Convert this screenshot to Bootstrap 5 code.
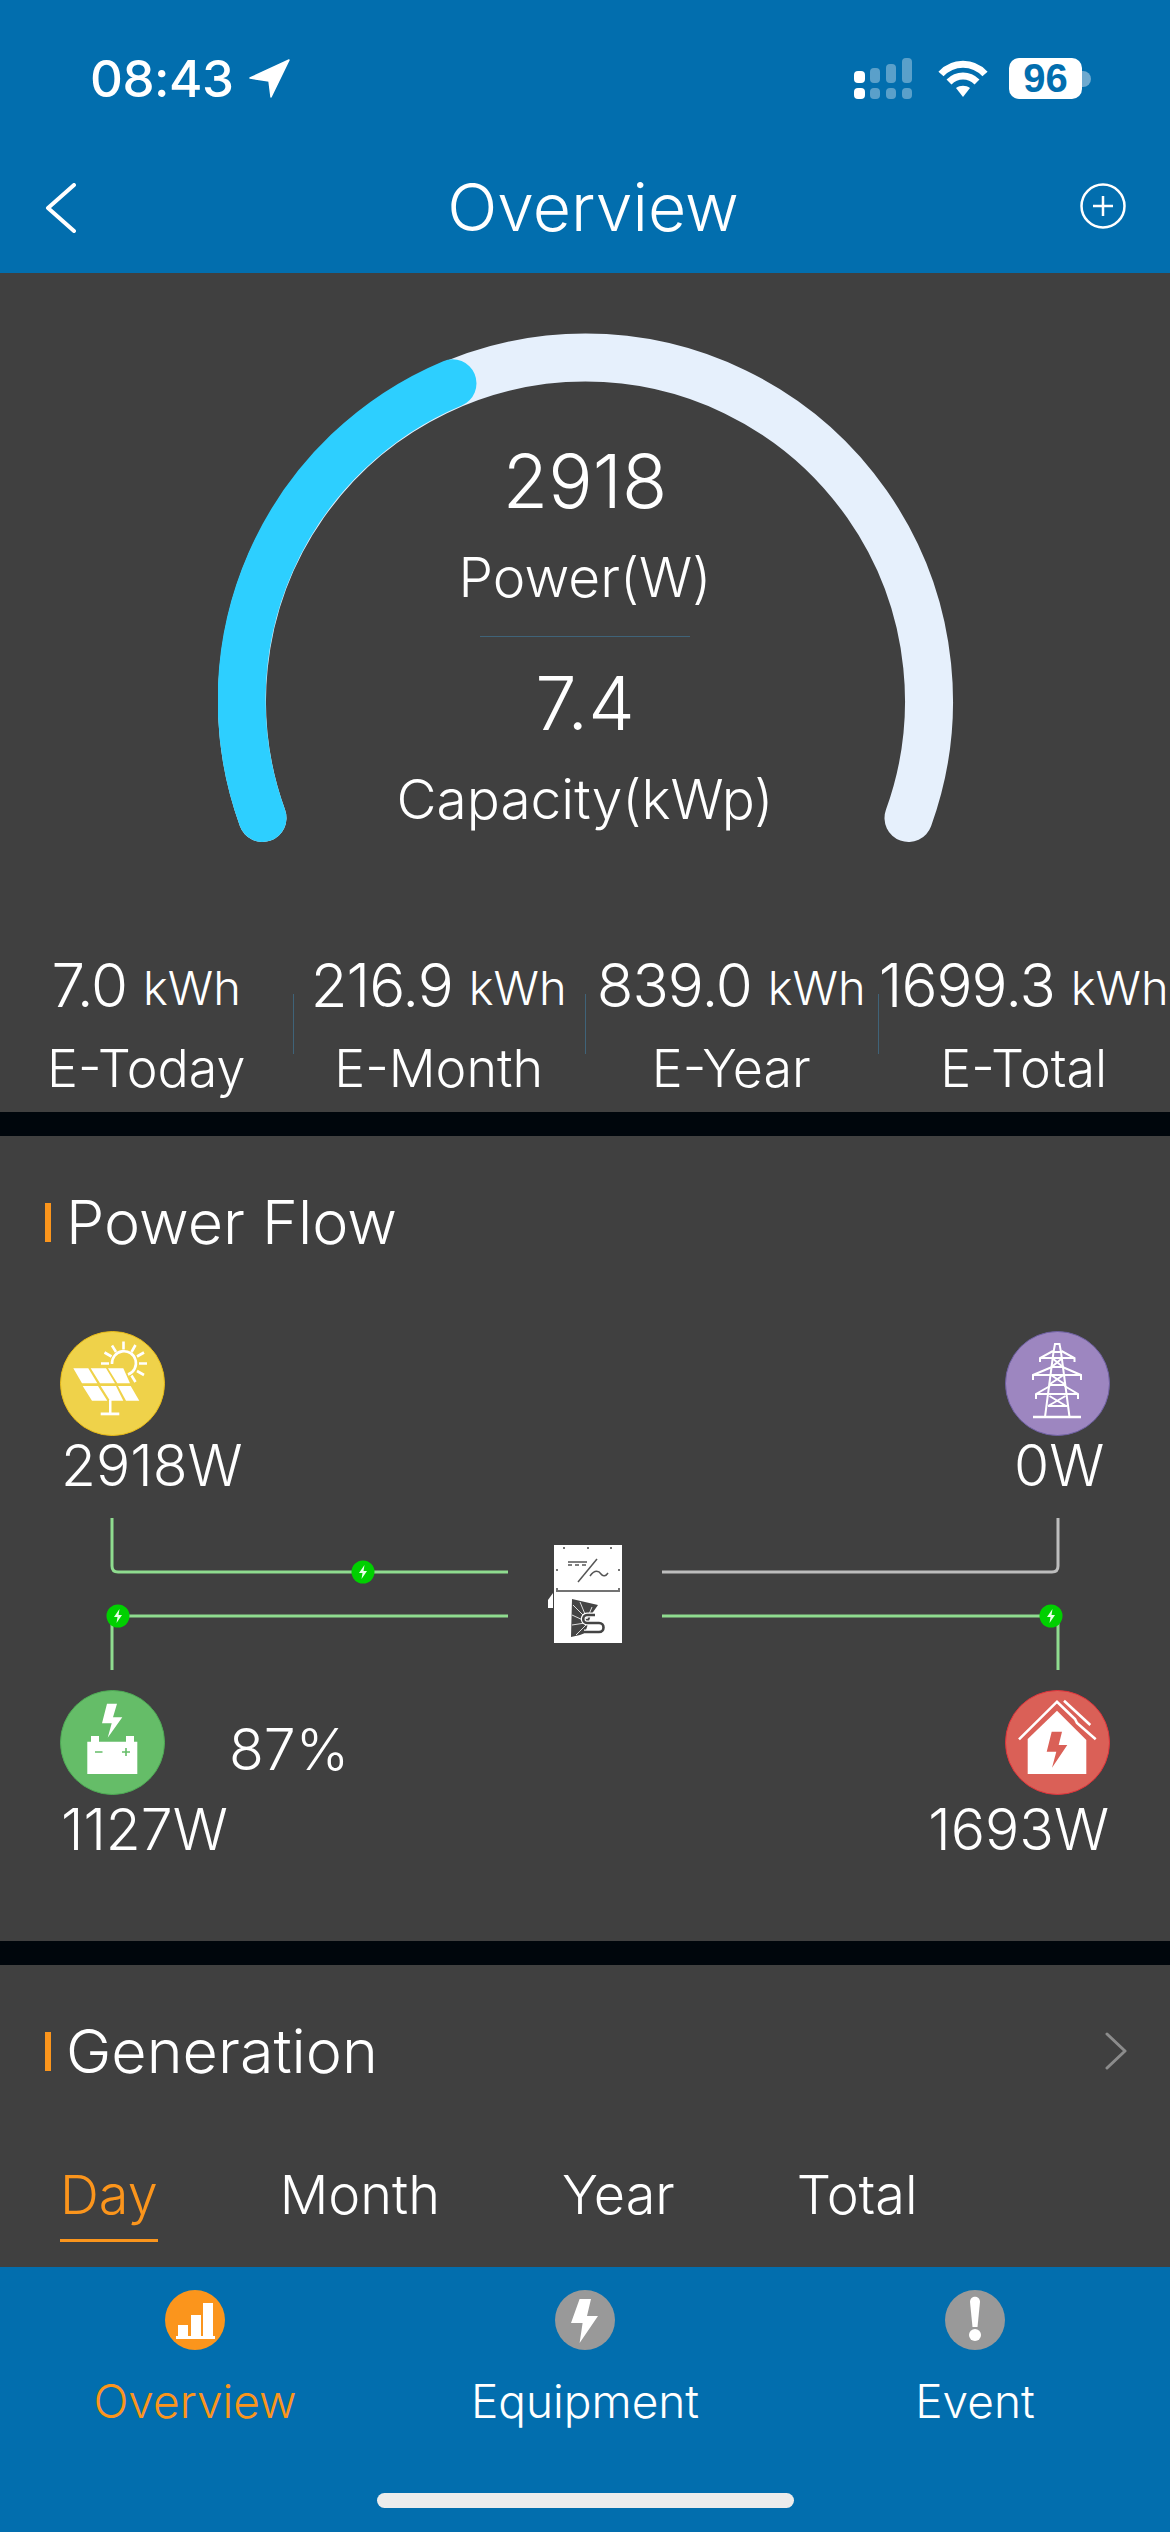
<!DOCTYPE html>
<html>
    <head>
        <meta charset="UTF-8">
        <meta name="viewport" content="width=device-width, initial-scale=1.0">
        <title>Overview</title>
        <link href="https://cdn.jsdelivr.net/npm/bootstrap@5.3.0/dist/css/bootstrap.min.css" rel="stylesheet">
        <script src="https://cdn.jsdelivr.net/npm/bootstrap@5.3.0/dist/js/bootstrap.bundle.min.js"></script>
        <style>
            html, body {
                width: 1170px;
                height: 2532px;
                overflow: hidden;
            }
            body {
                background-color: #00060c;
                color: #fff;
                font-family: "Inter", "Liberation Sans", sans-serif;
                font-weight: 300;
            }
            svg {
                display: block;
            }
            .app-header {
                background-color: #026eae;
                height: 273px;
            }
            .status-row {
                height: 57px;
                padding: 0 79px 0 90px;
                margin-top: 50px;
                position: absolute;
                top: 0;
                left: 0;
                width: 1170px;
            }
            .status-time {
                font-size: 51px;
                font-weight: 500;
                line-height: 57px;
                letter-spacing: -0.5px;
            }
            .batt-gap {
                margin-left: 21px;
            }
            .batt-pill {
                width: 73px;
                height: 41px;
                background: #fff;
                color: #026eae;
                border-radius: 10px;
                font-size: 40px;
                font-weight: 700;
                line-height: 41px;
                text-align: center;
                font-family: "Liberation Sans", sans-serif;
            }
            .batt-nub {
                width: 9px;
                height: 16px;
                background: #6ea9cf;
                border-radius: 0 8px 8px 0;
            }
            .nav-row {
                padding: 183px 44px 0 45px;
                height: 273px;
            }
            .nav-title {
                font-size: 66px;
                line-height: 48px;
                margin-left: 30px;
            }
            .panel-dark {
                background-color: #404040;
            }
            .gauge-panel {
                height: 839px;
                margin-bottom: 24px;
                padding-top: 60px;
            }
            .gauge-box {
                width: 734px;
                height: 570px;
                margin: 0 auto 0 218px;
                position: relative;
            }
            .gauge-text {
                position: absolute;
                left: 0;
                right: 0;
                top: 108px;
                text-align: center;
            }
            .gauge-num {
                font-size: 74px;
                line-height: 80px;
            }
            .gauge-label {
                font-size: 55px;
                line-height: 62px;
                margin-top: 25px;
            }
            .gauge-rule {
                width: 210px;
                height: 1px;
                background: #3f6379;
                margin: 28px auto 26px;
            }
            .stat-row {
                margin-top: 49px;
            }
            .stat-cell {
                position: relative;
                width: 292.5px;
                text-align: center;
            }
            .stat-cell + .stat-cell::before {
                content: '';
                position: absolute;
                left: 0;
                top: 42px;
                height: 60px;
                width: 1px;
                background: #3f6379;
            }
            .stat-value {
                font-size: 60px;
                line-height: 66px;
                white-space: nowrap;
                letter-spacing: -1px;
            }
            .stat-unit {
                font-size: 47px;
                letter-spacing: 0;
                position: relative;
                top: -2px;
            }
            .stat-label {
                font-size: 52px;
                line-height: 66px;
                margin-top: 13px;
            }
            .flow-panel {
                height: 805px;
                margin-bottom: 24px;
            }
            .sec-title {
                font-size: 61px;
                line-height: 72px;
                padding: 50px 0 0 45px;
                gap: 15px;
            }
            .sec-mark {
                width: 6px;
                height: 39px;
                background: #fb951c;
            }
            .sec-go {
                margin-right: 43px;
            }
            .flow-canvas {
                position: relative;
                height: 683px;
            }
            .flow-canvas svg.wires {
                position: absolute;
                left: 0;
                top: 0;
            }
            .flow-node {
                position: absolute;
                width: 105px;
                height: 105px;
            }
            .flow-val {
                position: absolute;
                font-size: 57px;
                line-height: 60px;
                white-space: nowrap;
            }
            .gen-panel {
                height: 303px;
            }
            .gen-tabs {
                padding: 75px 0 0 60px;
                font-size: 54px;
                line-height: 66px;
            }
            .gen-tab {
                margin-right: 122px;
            }
            .gen-tab.on {
                color: #fb951c;
                border-bottom: 3px solid #fb951c;
                padding-bottom: 11px;
            }
            .tab-bar {
                background-color: #026eae;
                height: 265px;
                position: absolute;
                top: 2267px;
                left: 0;
                width: 1170px;
            }
            .tab-item {
                width: 390px;
                padding-top: 23px;
                text-align: center;
            }
            .tab-item svg {
                margin: 0 auto;
            }
            .tab-label {
                font-size: 46px;
                line-height: 56px;
                margin-top: 23px;
            }
            .tab-label.on {
                color: #fb951c;
            }
            .home-bar {
                position: absolute;
                left: 377px;
                top: 226px;
                width: 417px;
                height: 15px;
                background: #ececec;
                border-radius: 8px;
            }
        </style>
    </head>

    <body>
        <!-- HEADER -->
        <div class="app-header position-relative">
            <div class="status-row d-flex align-items-center">
                <span class="status-time">08:43</span>
                <svg class="ms-3" width="42" height="40" viewBox="0 0 42 40"><path d="M40 1 L22 38 L20 22 L1 19 Z" fill="#fff" stroke="#fff" stroke-width="1.5" stroke-linejoin="round"/></svg>
                <svg class="ms-auto" width="60" height="41" viewBox="0 0 60 41" fill="#fff">
                    <rect x="0" y="13" width="11" height="12" rx="4"/><rect x="0" y="30" width="11" height="11" rx="4"/>
                    <g opacity=".35">
                        <rect x="16" y="10" width="10" height="15" rx="4"/><rect x="32" y="6" width="10" height="19" rx="4"/><rect x="48" y="0" width="10" height="25" rx="4"/>
                        <rect x="16" y="30" width="10" height="11" rx="4"/><rect x="32" y="30" width="10" height="11" rx="4"/><rect x="48" y="30" width="10" height="11" rx="4"/>
                    </g>
                </svg>
                <svg class="ms-4" width="50" height="38" viewBox="0 0 50 38" fill="none" stroke="#fff" stroke-width="7">
                    <path d="M3 14 C15 1 35 1 47 14"/><path d="M11 22 C19 14 31 14 39 22"/><path d="M25 37 L18 28 C22 25 28 25 32 28 Z" fill="#fff" stroke="none"/>
                </svg>
                <div class="batt-pill batt-gap">96</div>
                <div class="batt-nub"></div>
            </div>
            <div class="nav-row d-flex justify-content-between align-items-start">
                <svg width="31" height="50" viewBox="0 0 31 50" fill="none" stroke="#fff" stroke-width="4" stroke-linecap="round" stroke-linejoin="round"><path d="M29 2 L3 25 L29 48"/></svg>
                <div class="nav-title">Overview</div>
                <svg width="46" height="46" viewBox="0 0 46 46" fill="none" stroke="#fff" stroke-width="2.5"><circle cx="23" cy="23" r="21.5"/><path d="M13 23 H33 M23 13 V33"/></svg>
            </div>
        </div>

        <!-- GAUGE -->
        <div class="panel-dark gauge-panel">
            <div class="gauge-box">
                <svg width="736" height="570" viewBox="0 0 736 570" fill="none" stroke-width="48" stroke-linecap="round">
                    <path d="M44.5 485 A343.5 343.5 0 1 1 690.5 485" stroke="#e6f0fc"/>
                    <path d="M44.5 485 A343.5 343.5 0 0 1 234.5 50.3" stroke="#2dcfff"/>
                </svg>
                <div class="gauge-text">
                    <div class="gauge-num">2918</div>
                    <div class="gauge-label">Power(W)</div>
                    <div class="gauge-rule"></div>
                    <div class="gauge-num">7.4</div>
                    <div class="gauge-label">Capacity(kWp)</div>
                </div>
            </div>
            <div class="stat-row d-flex">
                <div class="stat-cell">
                    <div class="stat-value">7.0 <span class="stat-unit">kWh</span></div>
                    <div class="stat-label">E-Today</div>
                </div>
                <div class="stat-cell">
                    <div class="stat-value">216.9 <span class="stat-unit">kWh</span></div>
                    <div class="stat-label">E-Month</div>
                </div>
                <div class="stat-cell">
                    <div class="stat-value">839.0 <span class="stat-unit">kWh</span></div>
                    <div class="stat-label">E-Year</div>
                </div>
                <div class="stat-cell">
                    <div class="stat-value">1699.3 <span class="stat-unit">kWh</span></div>
                    <div class="stat-label">E-Total</div>
                </div>
            </div>
        </div>

        <!-- POWER FLOW -->
        <div class="panel-dark flow-panel">
            <div class="sec-title d-flex align-items-center">
                <span class="sec-mark"></span>
                <span>Power Flow</span>
            </div>
            <!-- canvas origin is y=1258 on the page -->
            <div class="flow-canvas">
                <svg class="wires" width="1170" height="683" viewBox="0 1258 1170 683" fill="none" stroke-width="3">
                    <path d="M112 1518 V1566 Q112 1572 118 1572 H508" stroke="#8fdc8f"/>
                    <path d="M662 1572 H1052 Q1058 1572 1058 1566 V1518" stroke="#bdbdbd"/>
                    <path d="M508 1616 H118 M112 1670 V1616 M662 1616 H1058 V1670" stroke="#8fdc8f"/>
                    <g id="flowDots"></g>
                    <!-- inverter -->
                    <path d="M553 1593 L548 1600 V1608 H553 Z" fill="#fff"/>
                    <rect x="554" y="1545" width="68" height="98" fill="#fff"/>
                    <g transform="translate(554 1545)">
                        <g fill="#444">
                            <circle cx="10" cy="3" r="1"/><circle cx="34" cy="3" r="1"/><circle cx="57" cy="3" r="1"/>
                            <circle cx="3" cy="25" r="1"/><circle cx="65" cy="25" r="1"/><circle cx="3" cy="44" r="1"/><circle cx="65" cy="44" r="1"/>
                        </g>
                        <path d="M2 46 H66" stroke="#444" stroke-width="1.5"/>
                        <path d="M14 17 H33" stroke="#555" stroke-width="1.5"/>
                        <path d="M14 20 H33" stroke="#555" stroke-width="1.5" stroke-dasharray="4 3"/>
                        <path d="M43 14 L24 37" stroke="#555" stroke-width="1.5"/>
                        <path d="M36 31 C41 24 45 26 47 29 C49 32 52 31 54 28" stroke="#555" stroke-width="1.5"/>
                        <path d="M18 54 L44 60 L37 70 L31 88 L26 90 L17 92 Z" fill="#444" stroke="none"/>
                        <path d="M33 74 L19 60 M33 74 L26 57 M33 74 L38 62 M31 76 L18 70 M31 78 L18 80 M32 80 L22 90" stroke="#ddd" stroke-width="1"/>
                        <path d="M41 70 H33 C28 70 28 78 33 78 H45 C51 78 51 87 45 87 H30" stroke="#fff" stroke-width="5"/>
                        <path d="M41 70 H33 C28 70 28 78 33 78 H45 C51 78 51 87 45 87 H30" stroke="#444" stroke-width="2.6"/>
                    </g>
                </svg>

                <!-- solar -->
                <svg class="flow-node" style="left:60px;top:73px" viewBox="0 0 105 105">
                    <circle cx="52.5" cy="52.5" r="52" fill="#efd24a" stroke="#e9bb16"/>
                    <g fill="#fff">
                        <path d="M13.3 37.3H28.3L37.3 52.3H22Z M30.7 37.3H46L55 52.3H40Z M48 37.3H63.3L70 52.3H57.3Z M22.7 55H38L47.3 69.7H32Z M40.7 55H56L63.3 69.7H50Z M58 55H70.7L79.3 69.7H66Z"/>
                        <rect x="49" y="69" width="2.5" height="14"/><rect x="40.7" y="81.5" width="18.6" height="2.8"/>
                    </g>
                    <g fill="none" stroke="#fff" stroke-width="2.6">
                        <path d="M52 33 A12 12 0 1 1 68 43.5"/>
                        <path d="M41 32.5H49 M44.5 21.5L51.5 25.5 M52 14.5L56 21 M63.5 10.5V18.5 M75.5 14L71.5 21 M84 21.5L77 25.5 M87 32.5H79 M84 44L77 40 M75.5 51L71.5 44.5"/>
                    </g>
                </svg>
                <div class="flow-val" style="left:61px;top:178px">2918W</div>

                <!-- grid -->
                <svg class="flow-node" style="left:1005px;top:73px" viewBox="0 0 105 105">
                    <circle cx="52.5" cy="52.5" r="52" fill="#9d86c0" stroke="#6f61a3"/>
                    <g fill="none" stroke="#fff" stroke-width="2">
                        <path d="M50 13H54.5L56 21H48.5Z"/>
                        <path d="M48.5 21L40 86 M56 21L64.5 86"/>
                        <path d="M28 86H76" stroke-width="2.4"/>
                        <path d="M35 31V27L48 20 M69.5 31V27L56.5 20 M35 27H69.5"/>
                        <path d="M28 49V44L47 36 M76 49V44L57.5 36 M28 44H76"/>
                        <path d="M31 68V63L45 55 M73 68V63L59.5 55 M31 63H73"/>
                        <path d="M47 27L58 36 M57.5 27L46.5 36 M46 44L59.5 53 M58.5 44L45 53 M44.5 65L61 75 M60.5 65L43 75 M43 75H62 M46 36H58.5 M45 54H60"/>
                    </g>
                </svg>
                <div class="flow-val" style="left:1014px;top:178px">0W</div>

                <!-- battery -->
                <svg class="flow-node" style="left:60px;top:432px" viewBox="0 0 105 105">
                    <circle cx="52.5" cy="52.5" r="52" fill="#65bd68" stroke="#4eab55"/>
                    <path d="M47 13.7H57L53 27.3H62.3L47.7 47.7L51.7 33.3H42Z M27.3 51.7H31V46H39V51.7H66V46H74V51.7H77.3V84H27.3Z" fill="#fff"/>
                    <path d="M35 62H42.5 M62 62H70 M66 58V66" stroke="#65bd68" stroke-width="1.6"/>
                </svg>
                <div class="flow-val" style="left:229px;top:462px">87%</div>
                <div class="flow-val" style="left:61px;top:542px">1127W</div>

                <!-- home -->
                <svg class="flow-node" style="left:1005px;top:432px" viewBox="0 0 105 105">
                    <circle cx="52.5" cy="52.5" r="52" fill="#da6057" stroke="#e2333b"/>
                    <path d="M52 20.7L81.3 50V84H22.7V49Z" fill="#fff"/>
                    <path d="M46.7 41.7H57L53.7 55H62.3L47 77.7L51.3 61.7H41.7Z" fill="#da6057"/>
                    <path d="M14 49.3L52 11.7L70 29L72 33L90.7 49.3 M59 10.7L85.3 35" fill="none" stroke="#fff" stroke-width="2.6"/>
                </svg>
                <div class="flow-val" style="right:61px;top:542px">1693W</div>
            </div>
        </div>

        <!-- GENERATION -->
        <div class="panel-dark gen-panel">
            <div class="sec-title d-flex align-items-center">
                <span class="sec-mark"></span>
                <span>Generation</span>
                <svg class="ms-auto sec-go" width="22" height="38" viewBox="0 0 22 38" fill="none" stroke="#8c8c8c" stroke-width="3" stroke-linecap="round" stroke-linejoin="round"><path d="M2 2L20 19L2 36"/></svg>
            </div>
            <div class="gen-tabs d-flex align-items-start">
                <div class="gen-tab on">Day</div>
                <div class="gen-tab">Month</div>
                <div class="gen-tab">Year</div>
                <div class="gen-tab">Total</div>
            </div>
        </div>

        <!-- TAB BAR -->
        <div class="tab-bar d-flex">
            <div class="tab-item">
                <svg width="60" height="60" viewBox="0 0 60 60"><circle cx="30" cy="30" r="30" fill="#fb951c"/><path d="M13 35H23V46H13Z M26 25H36V46H26Z M38 13H48V46H38Z M11 46H50V49H11Z" fill="#fff"/></svg>
                <div class="tab-label on">Overview</div>
            </div>
            <div class="tab-item">
                <svg width="60" height="60" viewBox="0 0 60 60"><circle cx="30" cy="30" r="30" fill="#999"/><path d="M24.6 9H36L32 26H43L24.6 53L27.6 33H16Z" fill="#fff"/></svg>
                <div class="tab-label">Equipment</div>
            </div>
            <div class="tab-item">
                <svg width="60" height="60" viewBox="0 0 60 60"><circle cx="30" cy="30" r="30" fill="#999"/><path d="M25 12C25 5 35 5 35 12L32.5 37H27.5Z" fill="#fff"/><circle cx="30" cy="45" r="6" fill="#fff"/></svg>
                <div class="tab-label">Event</div>
            </div>
            <div class="home-bar"></div>
        </div>

        <script>
            // little bolt markers on the wires
            const dots = [[363, 1572], [118, 1616], [1051, 1616]];
            document.getElementById("flowDots").innerHTML = dots.map(d => `
                <g transform="translate(${d[0]} ${d[1]})">
                    <circle r="11.5" fill="#00d000" stroke="none"/>
                    <path d="M1.5 -7L-4 1H-0.5L-1.5 7L4 -1H0.5Z" fill="#e8ffe8" stroke="none"/>
                </g>`).join("");
        </script>
    </body>
</html>
